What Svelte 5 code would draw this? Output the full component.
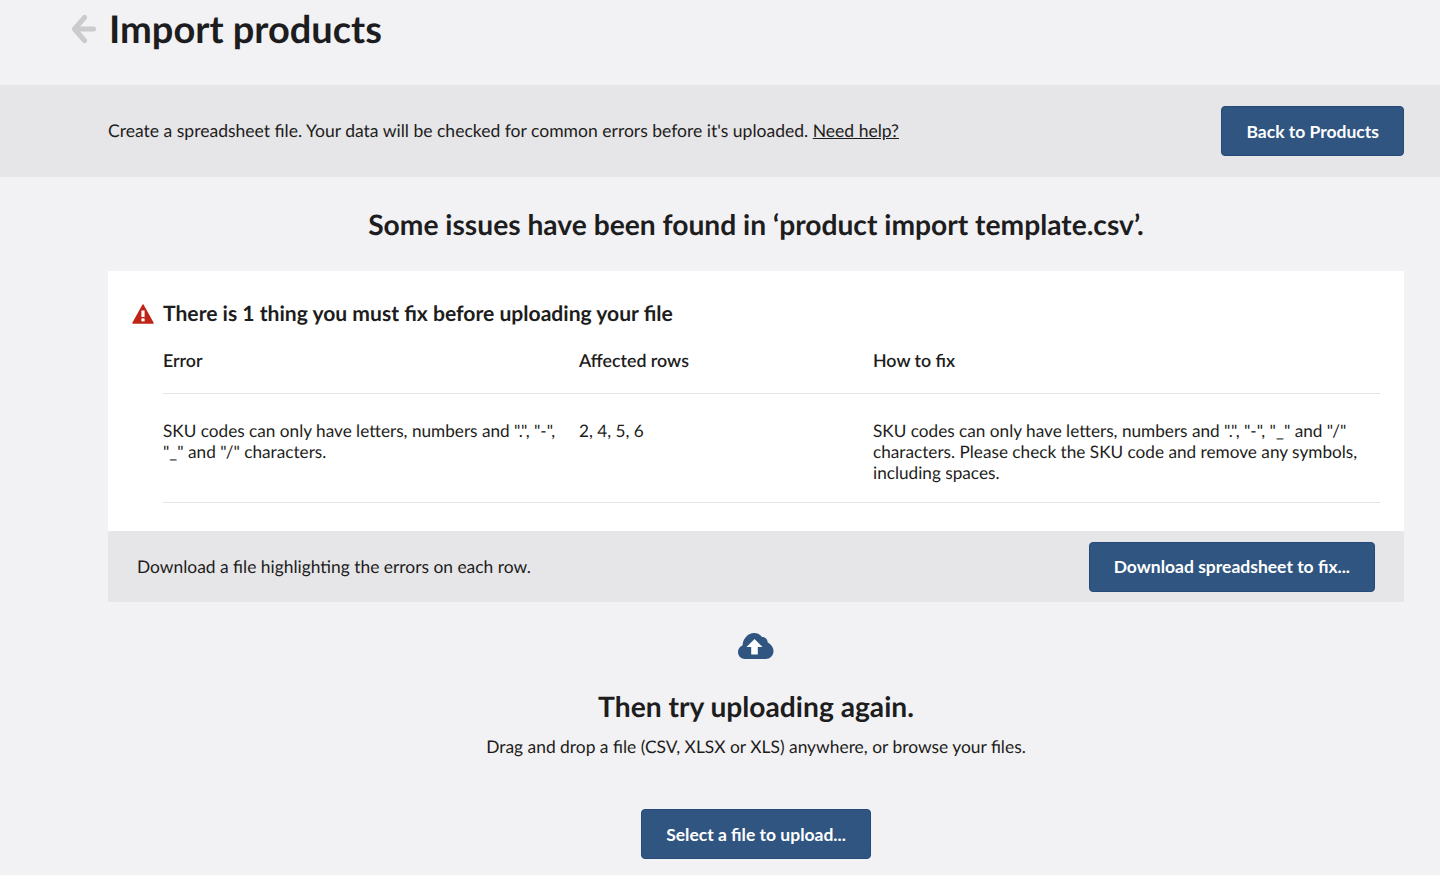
<script>
	const issues = [
		{
			error: `SKU codes can only have letters, numbers and ".", "-", "_" and "/" characters.`,
			rows: '2, 4, 5, 6',
			fix: `SKU codes can only have letters, numbers and ".", "-", "_" and "/" characters. Please check the SKU code and remove any symbols, including spaces.`
		}
	];
</script>

<div class="page">
	<header class="title-bar">
		<svg class="back-arrow" width="26" height="30" viewBox="0 0 26 30" aria-hidden="true">
			<path d="M13.5 3.5 L3.5 15 L13.5 26.5 M4.5 15 H22.5" fill="none" stroke="#cbcacd" stroke-width="5" stroke-linecap="round" stroke-linejoin="round" />
		</svg>
		<h1>Import products</h1>
	</header>

	<section class="intro-bar">
		<p>Create a spreadsheet file. Your data will be checked for common errors before it's uploaded. <a href="#help">Need help?</a></p>
		<button class="btn">Back to Products</button>
	</section>

	<main class="content">
		<h2 class="result-title">Some issues have been found in ‘product import template.csv’.</h2>

		<section class="card">
			<div class="card-body">
				<div class="card-heading">
					<svg class="warn" width="22" height="20" viewBox="0 0 22 20" aria-hidden="true">
						<path d="M11 1 L21 19 H1 Z" fill="#bf2418" stroke="#bf2418" stroke-width="1.5" stroke-linejoin="round" />
						<rect x="9.4" y="6.5" width="3.2" height="6.5" fill="#fff" />
						<rect x="9.4" y="14.4" width="3.2" height="3" fill="#fff" />
					</svg>
					<h3>There is 1 thing you must fix before uploading your file</h3>
				</div>
				<div class="issue-table">
					<div class="row head">
						<div>Error</div>
						<div>Affected rows</div>
						<div>How to fix</div>
					</div>
					{#each issues as issue}
						<div class="row">
							<div>{issue.error}</div>
							<div>{issue.rows}</div>
							<div>{issue.fix}</div>
						</div>
					{/each}
				</div>
			</div>
			<div class="card-foot">
				<p>Download a file highlighting the errors on each row.</p>
				<button class="btn">Download spreadsheet to fix...</button>
			</div>
		</section>

		<div class="upload">
			<svg class="cloud" width="36" height="26" viewBox="0 0 36 26" aria-hidden="true">
				<path d="M7 26 C3 26 0 23 0 19 C0 16 1.8 13.5 4.5 12.5 C5 5.5 10 0 16 0 C19.5 0 22 1.5 24 4 C26.8 3.8 29.5 6 29.7 9.5 C33 11 35.5 14.5 35.5 18 C35.5 22.5 32 26 27.5 26 Z" fill="#2f5580" />
				<path d="M16.5 6 L24.5 14 H19.8 V21.5 H13.2 V14 H8.5 Z" fill="#fff" />
			</svg>
			<h2>Then try uploading again.</h2>
			<p>Drag and drop a file (CSV, XLSX or XLS) anywhere, or browse your files.</p>
			<button class="btn">Select a file to upload...</button>
		</div>
	</main>
</div>

<style>
	:global(body) {
		background: #f2f1f4;
		font-family: Lato, "Liberation Sans", sans-serif;
		color: #1d1d20;
		text-rendering: geometricPrecision;
	}

	.page {
		height: 875px;
		overflow: hidden;
	}

	.title-bar {
		height: 85px;
		box-sizing: border-box;
		padding: 8px 0 0 71px;
		display: flex;
		align-items: flex-start;
		gap: 12px;
	}

	.back-arrow {
		margin-top: 6px;
		flex: none;
	}

	h1 {
		margin: 0;
		font-size: 38px;
		line-height: 43px;
		font-weight: 700;
	}

	.intro-bar {
		height: 92px;
		box-sizing: border-box;
		background: #e6e5e8;
		padding: 0 36px 0 108px;
		display: flex;
		align-items: center;
		justify-content: space-between;
	}

	p {
		margin: 0;
		font-size: 17.4px;
		line-height: 21px;
	}

	.intro-bar p {
		margin-bottom: 2px;
		font-size: 17.55px;
	}

	a {
		color: inherit;
	}

	.btn {
		height: 50px;
		padding: 0 24px;
		background: #2f5580;
		border: 1px solid #234a78;
		border-radius: 4px;
		color: #fff;
		font-family: inherit;
		font-size: 17.5px;
		font-weight: 700;
	}

	.content {
		padding: 0 36px 0 108px;
	}

	.result-title {
		margin: 0;
		padding: 31px 0 29px;
		text-align: center;
		font-size: 28.2px;
		line-height: 34px;
		font-weight: 700;
	}

	.card {
		background: #fff;
	}

	.card-body {
		padding: 30px 24px 28px 24px;
	}

	.card-heading {
		display: flex;
		align-items: center;
		gap: 9px;
	}

	.warn {
		flex: none;
	}

	h3 {
		margin: 0;
		font-size: 21.1px;
		line-height: 26px;
		font-weight: 700;
	}

	.issue-table {
		margin-left: 31px;
		font-size: 17.2px;
		line-height: 21px;
	}

	.row {
		display: grid;
		grid-template-columns: 416px 294px 1fr;
		padding: 26px 0 19px;
		border-bottom: 1px solid #e4e4e6;
	}

	.row > div {
		padding-right: 16px;
	}

	.row.head {
		padding: 23px 0 22px;
		font-size: 17.8px;
		font-weight: 600;
	}

	.card-foot {
		height: 71px;
		box-sizing: border-box;
		background: #e6e5e8;
		padding: 0 29px;
		display: flex;
		align-items: center;
		justify-content: space-between;
	}

	.upload {
		display: flex;
		flex-direction: column;
		align-items: center;
		padding-top: 31px;
	}

	.upload h2 {
		margin: 31px 0 0;
		font-size: 28.2px;
		line-height: 34px;
		font-weight: 700;
	}

	.upload p {
		margin-top: 12px;
	}

	.upload .btn {
		margin-top: 52px;
	}
</style>
